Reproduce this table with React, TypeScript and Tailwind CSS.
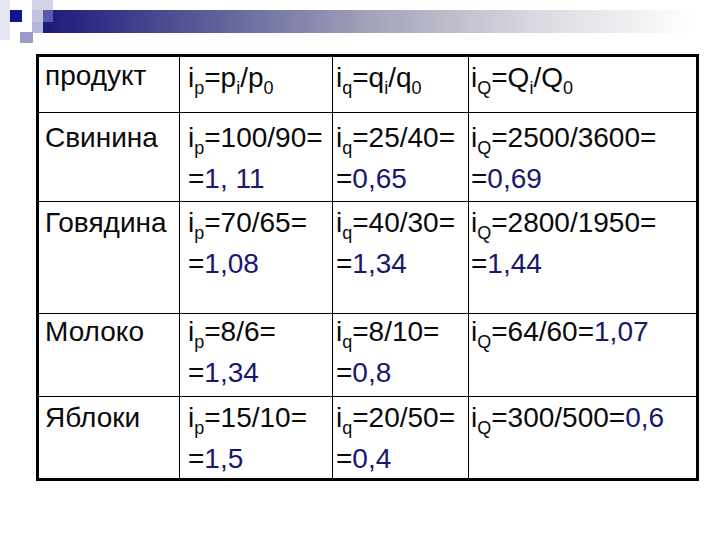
import React from 'react';

const NAVY = 'text-[#18186e]';

function Sub({ children }: { children: React.ReactNode }) {
  return <span className="text-[18px] leading-none align-[-7px]">{children}</span>;
}

function Idx({ s }: { s: string }) {
  return (
    <>
      i<Sub>{s}</Sub>
    </>
  );
}

function Res({ v }: { v: string }) {
  return (
    <>
      =<span className={NAVY}>{v}</span>
    </>
  );
}

type Row = {
  name: string;
  pad: string;
  cells: React.ReactNode[];
};

const rows: Row[] = [
  {
    name: 'Свинина',
    pad: 'pt-[4px]',
    cells: [
      <>
        <Idx s="p" />=100/90=
        <br />
        <Res v="1, 11" />
      </>,
      <>
        <Idx s="q" />=25/40=
        <br />
        <Res v="0,65" />
      </>,
      <>
        <Idx s="Q" />=2500/3600=
        <br />
        <Res v="0,69" />
      </>,
    ],
  },
  {
    name: 'Говядина',
    pad: 'pt-[0px]',
    cells: [
      <>
        <Idx s="p" />=70/65=
        <br />
        <Res v="1,08" />
      </>,
      <>
        <Idx s="q" />=40/30=
        <br />
        <Res v="1,34" />
      </>,
      <>
        <Idx s="Q" />=2800/1950=
        <br />
        <Res v="1,44" />
      </>,
    ],
  },
  {
    name: 'Молоко',
    pad: '-mt-[3px]',
    cells: [
      <>
        <Idx s="p" />=8/6=
        <br />
        <Res v="1,34" />
      </>,
      <>
        <Idx s="q" />=8/10=
        <br />
        <Res v="0,8" />
      </>,
      <>
        <Idx s="Q" />=64/60<Res v="1,07" />
      </>,
    ],
  },
  {
    name: 'Яблоки',
    pad: 'pt-[0px]',
    cells: [
      <>
        <Idx s="p" />=15/10=
        <br />
        <Res v="1,5" />
      </>,
      <>
        <Idx s="q" />=20/50=
        <br />
        <Res v="0,4" />
      </>,
      <>
        <Idx s="Q" />=300/500<Res v="0,6" />
      </>,
    ],
  },
];

const colPad = ['pl-[6px]', 'pl-[8px]', 'pl-[3px]', 'pl-[2px]'];

function TemplateBand() {
  return (
    <svg width="720" height="54" viewBox="0 0 720 54" className="block">
      <defs>
        <linearGradient id="band" x1="0" x2="1" y1="0" y2="0">
          <stop offset="0" stopColor="#1a1a7c" />
          <stop offset="0.25" stopColor="#5c5c98" />
          <stop offset="0.5" stopColor="#a2a2ba" />
          <stop offset="0.75" stopColor="#d8d8e0" />
          <stop offset="1" stopColor="#ffffff" />
        </linearGradient>
      </defs>
      <rect x="0" y="0" width="10" height="40" fill="#e6e6f3" />
      <rect x="43" y="10" width="652" height="23" fill="url(#band)" />
      <rect x="32" y="0" width="21" height="10" fill="#d2d2e8" />
      <rect x="32" y="10" width="11" height="12" fill="#c4c4e2" />
      <rect x="43" y="10" width="10" height="12" fill="#5a5aa8" />
      <rect x="32" y="22" width="11" height="11" fill="#b6b6da" />
      <rect x="10" y="10" width="12" height="12" fill="#13138a" />
      <rect x="20" y="32" width="13" height="11" fill="#9a9ac8" />
    </svg>
  );
}

export default function App() {
  const cell = 'border-black text-[28px] leading-[41px] text-[#0a0a0a] whitespace-nowrap';
  return (
    <div className="w-[720px] h-[540px] bg-white font-['Liberation_Sans',Arial,sans-serif]">
      <TemplateBand />
      <div className="ml-[36px] w-[663px] border-[3px] border-black">
        <div className="grid grid-cols-[141px_153px_136px_227px] grid-rows-[56px_89px_112px_83px_81px]">
          <div className={`${cell} border-r border-b -mt-[2px] ${colPad[0]}`}>продукт</div>
          <div className={`${cell} border-r border-b ${colPad[1]}`}>
            <Idx s="p" />=p<Sub>i</Sub>/p<Sub>0</Sub>
          </div>
          <div className={`${cell} border-r border-b ${colPad[2]}`}>
            <Idx s="q" />=q<Sub>i</Sub>/q<Sub>0</Sub>
          </div>
          <div className={`${cell} border-b ${colPad[3]}`}>
            <Idx s="Q" />=Q<Sub>i</Sub>/Q<Sub>0</Sub>
          </div>
          {rows.map((r, ri) => {
            const last = ri === rows.length - 1;
            const bb = last ? '' : 'border-b';
            return (
              <React.Fragment key={r.name}>
                <div className={`${cell} border-r ${bb} ${r.pad} ${colPad[0]}`}>{r.name}</div>
                {r.cells.map((c, ci) => (
                  <div
                    key={ci}
                    className={`${cell} ${ci < 2 ? 'border-r' : ''} ${bb} ${r.pad} ${colPad[ci + 1]}`}
                  >
                    {c}
                  </div>
                ))}
              </React.Fragment>
            );
          })}
        </div>
      </div>
    </div>
  );
}
